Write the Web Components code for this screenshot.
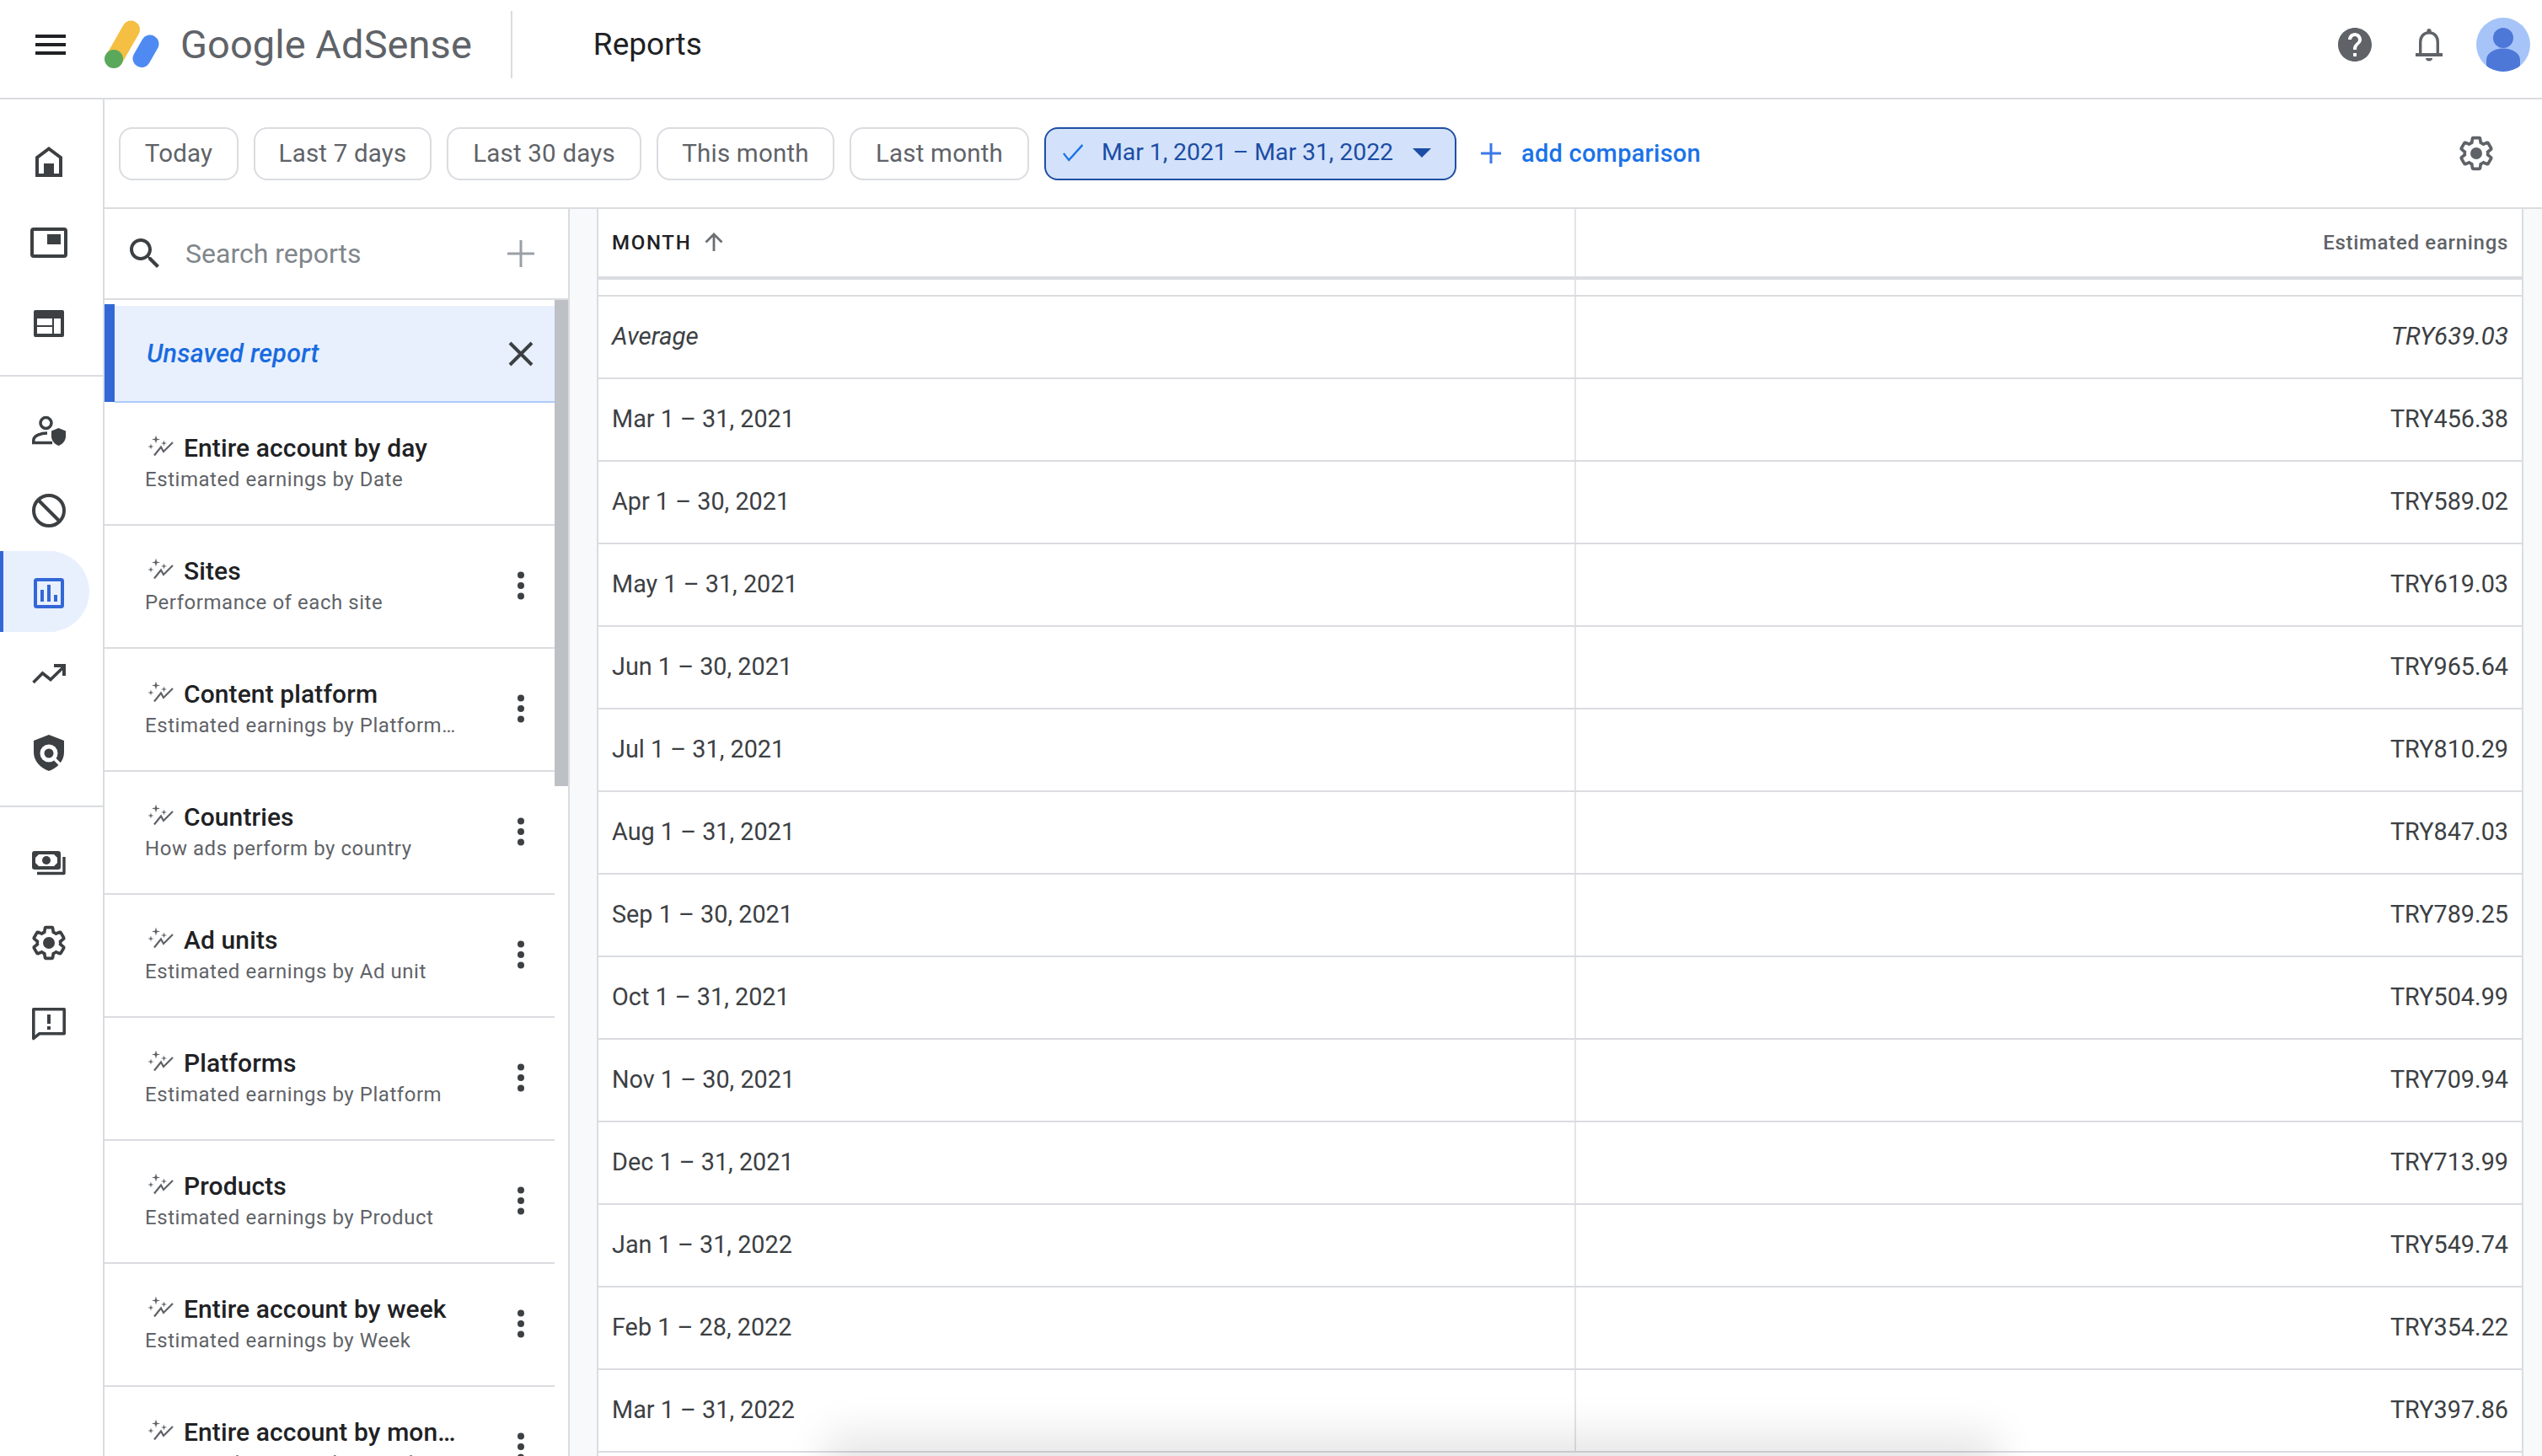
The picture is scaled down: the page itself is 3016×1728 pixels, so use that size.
<!DOCTYPE html>
<html lang="en"><head><meta charset="utf-8"><title>Reports</title>
<style>
html,body{margin:0;width:3016px;height:1728px;overflow:hidden;background:#fff;font-family:Roboto,"Liberation Sans",sans-serif}
</style></head><body>
<adsense-app></adsense-app>
<script>
const D='#3c4043',G='#5f6368',B='#3367d6';
const star=(x,y,r)=>{const k=r*.22;return `M${x} ${y-r}L${x+k} ${y-k}L${x+r} ${y}L${x+k} ${y+k}L${x} ${y+r}L${x-k} ${y+k}L${x-r} ${y}L${x-k} ${y-k}Z`};
const gear=c=>`<g transform="translate(24 24) scale(1.83) translate(-12 -12)"><path fill="none" stroke="${c}" stroke-width="2" d="M19.43 12.98c.04-.32.07-.64.07-.98 0-.34-.03-.66-.07-.98l2.11-1.65c.19-.15.24-.42.12-.64l-2-3.46c-.09-.16-.26-.25-.44-.25-.06 0-.12.01-.17.03l-2.49 1c-.52-.4-1.08-.73-1.69-.98l-.38-2.65C14.46 2.18 14.25 2 14 2h-4c-.25 0-.46.18-.49.42l-.38 2.65c-.61.25-1.17.59-1.69.98l-2.49-1c-.06-.02-.12-.03-.18-.03-.17 0-.34.09-.43.25l-2 3.46c-.13.22-.07.49.12.64l2.11 1.65c-.04.32-.07.65-.07.98 0 .33.03.66.07.98l-2.11 1.65c-.19.15-.24.42-.12.64l2 3.46c.09.16.26.25.44.25.06 0 .12-.01.17-.03l2.49-1c.52.4 1.08.73 1.69.98l.38 2.65c.03.24.24.42.49.42h4c.25 0 .46-.18.49-.42l.38-2.65c.61-.25 1.17-.59 1.69-.98l2.49 1c.06.02.12.03.18.03.17 0 .34-.09.43-.25l2-3.46c.12-.22.07-.49-.12-.64l-2.11-1.65z"/></g><circle cx="24" cy="24" r="7" fill="${c}"/>`;
const ICONS={
 menu:`<path fill="#202124" d="M6 12h36v4H6zM6 22h36v4H6zM6 32h36v4H6z"/>`,
 home:`<path fill="none" stroke="${D}" stroke-width="4" d="M24 8.5 38 19V40H10V19Z"/><path fill="${D}" d="M18 26h12v16H18z"/>`,
 ads:`<rect x="4" y="4" width="40" height="32" rx="2" transform="translate(0 4)" fill="none" stroke="${D}" stroke-width="4"/><path fill="${D}" d="M22 14h16v12H22z"/>`,
 layout:`<path fill="${D}" fill-rule="evenodd" d="M8 8h32a2 2 0 0 1 2 2v28a2 2 0 0 1-2 2H8a2 2 0 0 1-2-2V10a2 2 0 0 1 2-2ZM10 18v8h18v-8ZM10 28v8h18v-8ZM30 18v18h8V18Z"/>`,
 person:`<circle cx="20.5" cy="16" r="6.5" fill="none" stroke="${D}" stroke-width="3.5"/><path fill="none" stroke="${D}" stroke-width="3.5" d="M5.800 39.500V36.500C5.800 31 15 28 22 28M4 39.500H28"/><path fill="${D}" d="M35.500 22 44 25.500V32C44 37 40 41.500 35.500 43 31 41.500 27 37 27 32V25.500Z"/>`,
 block:`<circle cx="24" cy="24" r="18" fill="none" stroke="${D}" stroke-width="4"/><path stroke="${D}" stroke-width="4" d="M11 11 37 37"/>`,
 bars:`<rect x="8" y="10" width="32" height="32" rx="1.5" fill="none" stroke="${B}" stroke-width="4"/><path fill="${B}" d="M14 22h4v14h-4zM22 16h4v20h-4zM30 28h4v8h-4z"/>`,
 trend:`<path fill="none" stroke="${D}" stroke-width="3.6" d="M5.500 36 16.500 25 26 32.500 41 18"/><path fill="${D}" d="M30 14H44V28H40V18H30Z"/>`,
 shield:`<path fill="${D}" d="M24 2 42 9V23C42 33 34 41.500 24 45 14 41.500 6 33 6 23V9Z"/><circle cx="24" cy="24" r="10.500" fill="#fff"/><circle cx="24" cy="24" r="5.500" fill="${D}"/><path stroke="#fff" stroke-width="3.500" d="M30 30 39 39"/>`,
 money:`<path fill="none" stroke="${D}" stroke-width="3.400" stroke-linejoin="round" d="M10 37.500H42V18"/><rect x="4" y="11" width="34" height="22" rx="3" fill="${D}"/><path fill="#fff" d="M12 15H30L34 19V25L30 29H12L8 25V19Z"/><circle cx="21" cy="22" r="5" fill="${D}"/>`,
 gear:gear(D),
 gearg:gear(G),
 feedback:`<path fill="none" stroke="${D}" stroke-width="3.600" stroke-linejoin="round" d="M5.800 6.800H42.200V35.800H12.500L5.800 41.500Z"/><path fill="${D}" d="M22 13h4v11h-4zM22 27h4v4h-4z"/>`,
 help:`<g transform="scale(2)"><path fill="${G}" d="M12 2C6.480 2 2 6.480 2 12s4.480 10 10 10 10-4.480 10-10S17.520 2 12 2zm1 17h-2v-2h2v2zm2.070-7.750l-.9.920C13.450 12.900 13 13.500 13 15h-2v-.5c0-1.100.450-2.100 1.170-2.830l1.240-1.260c.370-.360.590-.860.590-1.410 0-1.100-.9-2-2-2s-2 .9-2 2H8c0-2.210 1.790-4 4-4s4 1.790 4 4c0 .880-.360 1.680-.930 2.250z"/></g>`,
 bell:`<circle cx="24" cy="7.500" r="2.600" fill="${G}"/><path fill="none" stroke="${G}" stroke-width="3.400" d="M13.700 35V21C13.700 14 18 9.700 24 9.700S34.300 14 34.300 21V35"/><path fill="${G}" d="M8 34H40V38H8ZM20 40H28C28 42 26.500 43.500 24 43.500S20 42 20 40Z"/>`,
 search:`<g transform="scale(2)"><path fill="${D}" d="M15.500 14h-.79l-.28-.27C15.410 12.590 16 11.110 16 9.500 16 5.910 13.090 3 9.500 3S3 5.910 3 9.500 5.910 16 9.500 16c1.610 0 3.090-.59 4.230-1.570l.27.28v.79l5 4.990L20.490 19l-4.990-5zm-6 0C7.010 14 5 11.990 5 9.500S7.010 5 9.500 5 14 7.010 14 9.500 11.990 14 9.500 14z"/></g>`,
 plusg:`<path stroke="#9aa0a6" stroke-width="3" d="M8 24H40M24 8V40"/>`,
 plusb:`<path stroke="#3b78e7" stroke-width="3" d="M12 24H36M24 12V36"/>`,
 close:`<path stroke="${D}" stroke-width="4" d="M11 11 37 37M37 11 11 37"/>`,
 kebab:`<circle cx="24" cy="11.500" r="4" fill="${D}"/><circle cx="24" cy="24" r="4" fill="${D}"/><circle cx="24" cy="36.500" r="4" fill="${D}"/>`,
 up:`<path fill="none" stroke="#6b6e72" stroke-width="2.800" d="M24 34V14M14.500 23.500 24 14 33.500 23.500"/>`,
 spark:`<path fill="${G}" d="${star(9,4.500,5)} ${star(3,13,3.500)} ${star(18.500,9,3.500)}"/><path fill="none" stroke="${G}" stroke-width="2.200" d="M7 23.500 15 13.500 18 19 29 8"/>`
};
class Base extends HTMLElement{
 constructor(){super();this.attachShadow({mode:'open'})}
 connectedCallback(){this.shadowRoot.innerHTML=this.render()}
 render(){return ''}
}
const def=(n,r)=>customElements.define(n,class extends Base{render(){return r.call(this)}});
def('x-icon',function(){const s=this.getAttribute('size')||48,v=this.getAttribute('vb')||'0 0 48 48';
 return `<style>:host{display:block;width:${s}px;height:${this.getAttribute('h')||s}px;flex:none}svg{display:block;width:100%;height:100%}</style><svg viewBox="${v}" xmlns="http://www.w3.org/2000/svg" aria-hidden="true">${ICONS[this.getAttribute('name')]}</svg>`});

def('ad-logo',function(){return `<style>:host{display:flex;align-items:center;margin-left:40px}svg{display:block;flex:none}
 span{font:400 47px/60px Roboto,sans-serif;color:${G};margin-left:24px;letter-spacing:.05px}</style>
 <svg width="66" height="58" viewBox="124 20 66 58"><path stroke="#f4bf42" stroke-width="21" stroke-linecap="round" d="M155.500 31 135.500 66"/><path stroke="#4e8af1" stroke-width="21" stroke-linecap="round" d="M178 48 168 65.500"/><circle cx="135" cy="66" r="11" fill="#5aa85c"/></svg><span>Google AdSense</span>`});

def('app-header',function(){return `<style>:host{display:flex;align-items:center;height:106px;border-bottom:2px solid #dadce0;box-sizing:content-box;padding:0 14px 10px 36px}
 .div{width:2px;height:80px;background:#dadce0;margin-left:46px}
 h1{font:400 37px/48px Roboto,sans-serif;color:#202124;margin:0 0 0 96px}
 .sp{flex:1}.a{margin-left:40px}
 .av{width:64px;height:64px;border-radius:50%;background:#a6c4f8;overflow:hidden;position:relative;margin-left:32px}
 .av svg{display:block}</style>
 <x-icon name="menu"></x-icon><ad-logo></ad-logo><div class="div"></div><h1>Reports</h1><div class="sp"></div>
 <x-icon name="help"></x-icon><x-icon class="a" name="bell"></x-icon>
 <div class="av"><svg width="64" height="64" viewBox="0 0 64 64"><circle cx="32" cy="24" r="12" fill="#4d78d8"/><ellipse cx="32" cy="50" rx="20" ry="13.500" fill="#4d78d8"/><path fill="#4d78d8" d="M12 50H52V64H12Z"/></svg></div>`});

def('nav-item',function(){const a=this.hasAttribute('active');return `<style>:host{display:block;height:96px;width:106px;box-sizing:border-box;padding:24px 0 0 34px;${a?'background:#e8f0fe;border-radius:0 48px 48px 0;box-shadow:inset 4px 0 0 '+B+';':''}}</style><x-icon name="${this.getAttribute('icon')}"></x-icon>`});

def('side-nav',function(){return `<style>:host{display:block;width:122px;border-right:2px solid #dadce0;flex:none}
 .g{padding:26px 0 13px;border-bottom:2px solid #dadce0}.g+.g{padding:15px 0 14px}.g:last-child{border:0;padding-top:17px}</style>
 <div class="g"><nav-item icon="home"></nav-item><nav-item icon="ads"></nav-item><nav-item icon="layout"></nav-item></div>
 <div class="g"><nav-item icon="person"></nav-item><nav-item icon="block"></nav-item><nav-item icon="bars" active></nav-item><nav-item icon="trend"></nav-item><nav-item icon="shield"></nav-item></div>
 <div class="g"><nav-item icon="money"></nav-item><nav-item icon="gear"></nav-item><nav-item icon="feedback"></nav-item></div>`});

def('filter-chip',function(){const s=this.hasAttribute('selected');return `<style>:host{display:flex;align-items:center;justify-content:center;height:63px;box-sizing:border-box;width:${this.getAttribute('w')}px;border:2px solid ${s?'#1f4fa3':'#dadce0'};border-radius:16px;background:${s?'#d3e2fa':'#fff'};font:400 ${s?'28.500px':'29.500px'}/40px Roboto,sans-serif;letter-spacing:${s?'-.1px':'.2px'};color:${s?'#1c4da5':G};flex:none;white-space:nowrap}
 </style><slot></slot>`});

def('date-toolbar',function(){return `<style>:host{display:flex;align-items:center;gap:18px;height:128px;padding:0 54px 0 17px;border-bottom:2px solid #dadce0;box-sizing:content-box}
 .sel{display:flex;align-items:center;width:100%;padding-left:18px;box-sizing:border-box;position:relative;top:-1px}.t{margin-left:20px}.c{margin-left:23px}
 .add{display:flex;align-items:center;gap:12px;color:#1a73e8;font:500 29px/40px Roboto,sans-serif;letter-spacing:.25px;margin-left:-1px}
 .sp{flex:1}svg{display:block}</style>
 <filter-chip w="142">Today</filter-chip><filter-chip w="211">Last 7 days</filter-chip><filter-chip w="231">Last 30 days</filter-chip><filter-chip w="211">This month</filter-chip><filter-chip w="213">Last month</filter-chip>
 <filter-chip w="489" selected><div class="sel"><svg width="28" height="22" viewBox="0 0 28 22"><path fill="none" stroke="#1a73e8" stroke-width="2.500" d="M1 12 8 20 26 2" transform="translate(2 0) scale(.9 1)"/></svg><span class="t">Mar 1, 2021 – Mar 31, 2022</span><svg class="c" width="22" height="11" viewBox="0 0 22 11"><path fill="#1c4da5" d="M0 0H22L11 11Z"/></svg></div></filter-chip>
 <div class="add"><x-icon name="plusb"></x-icon><span>add comparison</span></div><div class="sp"></div><x-icon name="gearg"></x-icon>`});

def('report-item',function(){const k=!this.hasAttribute('nokebab');return `<style>:host{display:flex;height:146px;box-sizing:border-box;border-bottom:2px solid #dadce0;padding:36px 16px 0 48px}
 .b{flex:1;min-width:0}.l{display:flex}.l x-icon{margin:3px 12px 0 4px}
 .t{font:500 30px/36px Roboto,sans-serif;color:#202124;letter-spacing:.1px;white-space:nowrap}
 .s{font:400 24px/36px Roboto,sans-serif;color:${G};letter-spacing:.55px;margin-top:1px;white-space:nowrap}
 .k{margin-top:-13px;width:48px;flex:none;align-self:flex-start}.k x-icon{margin-top:24px}</style>
 <div class="b"><div class="l"><x-icon name="spark" size="30" h="30" vb="0 0 30 30"></x-icon><div class="t">${this.getAttribute('t')}</div></div><div class="s">${this.getAttribute('s')}</div></div>
 <div class="k">${k?'<x-icon name="kebab"></x-icon>':''}</div>`});

def('report-panel',function(){const items=[['Entire account by day','Estimated earnings by Date',1],['Sites','Performance of each site'],['Content platform','Estimated earnings by Platform…'],['Countries','How ads perform by country'],['Ad units','Estimated earnings by Ad unit'],['Platforms','Estimated earnings by Platform'],['Products','Estimated earnings by Product'],['Entire account by week','Estimated earnings by Week'],['Entire account by mon…','Estimated earnings by Month']];
 return `<style>:host{display:flex;flex-direction:column;width:552px;box-sizing:border-box;border-right:2px solid #dadce0;flex:none;overflow:hidden;height:100%;background:#fff}
 .search{display:flex;align-items:center;height:106px;border-bottom:2px solid #dadce0;padding:0 32px 0 24px;flex:none}
 .q{flex:1;margin-left:24px;font:400 32px/40px Roboto,sans-serif;color:#80868b}
 .w{display:flex;flex:1;min-height:0}.list{width:534px;flex:none}
 .track{width:16px;flex:none}.thumb{height:577px;background:#bdc1c6}
 .un{display:flex;height:117px;margin-top:5px}.bar{width:12px;height:116px;background:${B};flex:none}
 .ub{flex:1;margin-top:2px;background:#e8f0fe;border-bottom:2px solid #aecbfa;display:flex;align-items:center;padding:0 16px 0 38px}
 .ut{flex:1;font:italic 500 30.500px/40px Roboto,sans-serif;color:#1a6be0;letter-spacing:.2px}</style>
 <div class="search"><x-icon name="search"></x-icon><div class="q">Search reports</div><x-icon name="plusg"></x-icon></div>
 <div class="w"><div class="list"><div class="un"><div class="bar"></div><div class="ub"><div class="ut">Unsaved report</div><x-icon name="close"></x-icon></div></div>
 ${items.map(i=>`<report-item t="${i[0]}" s="${i[1]}"${i[2]?' nokebab':''}></report-item>`).join('')}</div><div class="track"><div class="thumb"></div></div></div>`});

def('table-row',function(){const i=this.hasAttribute('avg');return `<style>:host{display:grid;grid-template-columns:1158px 1fr;height:98px;box-sizing:border-box;border-bottom:2px solid #dadce0;font:${i?'italic ':''}400 ${i?'29.500px':'28.800px'}/36px Roboto,sans-serif;color:${D}}
 div{display:flex;align-items:center;padding-bottom:2px}.a{padding-left:16px}.b{justify-content:flex-end;padding-right:16px;border-left:2px solid #e3e4e7}</style>
 <div class="a">${this.getAttribute('m')}</div><div class="b">${this.getAttribute('v')}</div>`});

def('data-table',function(){const rows=[['Mar 1 – 31, 2021','456.38'],['Apr 1 – 30, 2021','589.02'],['May 1 – 31, 2021','619.03'],['Jun 1 – 30, 2021','965.64'],['Jul 1 – 31, 2021','810.29'],['Aug 1 – 31, 2021','847.03'],['Sep 1 – 30, 2021','789.25'],['Oct 1 – 31, 2021','504.99'],['Nov 1 – 30, 2021','709.94'],['Dec 1 – 31, 2021','713.99'],['Jan 1 – 31, 2022','549.74'],['Feb 1 – 28, 2022','354.22'],['Mar 1 – 31, 2022','397.86']];
 return `<style>:host{display:block;width:2286px;box-sizing:border-box;border-left:2px solid #dadce0;border-right:2px solid #dadce0;background:#fff;flex:none;height:100%;overflow:hidden}
 .h,.sp{display:grid;grid-template-columns:1158px 1fr}
 .h{height:84px;box-sizing:border-box;border-bottom:4px solid #dadce0}
 .h div{display:flex;align-items:center}
 .m{padding-left:16px;font:500 24px/30px Roboto,sans-serif;letter-spacing:1.7px;color:#202124}.m x-icon{margin-left:3px}
 .e{justify-content:flex-end;padding-right:16px;border-left:2px solid #e3e4e7;font:500 24px/30px Roboto,sans-serif;color:${G};letter-spacing:.7px}
 .sp{height:20px;box-sizing:border-box;border-bottom:2px solid #dadce0}.sp i{grid-column:2;border-left:2px solid #e3e4e7}</style>
 <div class="h"><div class="m">MONTH<x-icon name="up" size="48"></x-icon></div><div class="e">Estimated earnings</div></div>
 <div class="sp"><i></i></div>
 <table-row avg m="Average" v="TRY639.03"></table-row>
 ${rows.map(r=>`<table-row m="${r[0]}" v="TRY${r[1]}"></table-row>`).join('')}`});

def('adsense-app',function(){return `<style>:host{display:flex;flex-direction:column;width:3016px;height:1728px;position:relative;overflow:hidden;background:#fff}
 .body{display:flex;flex:1;min-height:0}.main{flex:1;display:flex;flex-direction:column;min-width:0}
 .c{display:flex;flex:1;min-height:0;background:#f8f9fa}.gut{width:32px;flex:none}
 .shadow{position:absolute;left:1000px;width:1350px;top:1728px;height:60px;box-shadow:0 -6px 50px 20px rgba(0,0,0,.1)}</style>
 <app-header></app-header><div class="body"><side-nav></side-nav><div class="main"><date-toolbar></date-toolbar>
 <div class="c"><report-panel></report-panel><div class="gut"></div><data-table></data-table></div></div></div><div class="shadow"></div>`});
</script>
</body></html>
